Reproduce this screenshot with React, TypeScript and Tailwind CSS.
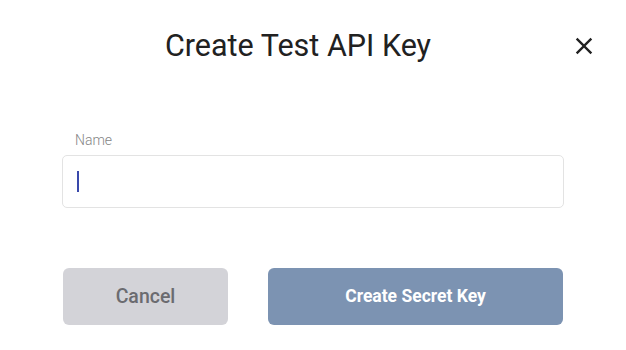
export default function App() {
  return (
    <div
      className="w-[626px] h-[350px] bg-white overflow-hidden"
      style={{ fontFamily: 'Roboto, "Liberation Sans", sans-serif' }}
    >
      <div className="flex items-center pt-[26px] pl-[26px] pr-[28px] h-[66px]">
        <h1 className="flex-1 text-center text-[30.5px] leading-[36px] text-[#212121] font-normal">
          Create Test API Key
        </h1>
        <button className="w-[28px] h-[28px] flex items-center justify-center text-[#212121]">
          <svg width="28" height="28" viewBox="0 0 24 24" fill="currentColor">
            <path d="M19 6.41L17.59 5 12 10.59 6.41 5 5 6.41 10.59 12 5 17.59 6.41 19 12 13.41 17.59 19 19 17.59 13.41 12z" />
          </svg>
        </button>
      </div>

      <div className="px-[62px] pt-[65px]">
        <label className="block pl-[13px] text-[14px] leading-[18px] text-[#858585] font-light">Name</label>
        <div className="mt-[6px] h-[53px] border border-[#e3e3e3] rounded-[5px] flex items-center px-[14px]">
          <div className="w-[2px] h-[21px] bg-[#3949ab]" />
        </div>
      </div>

      <div className="flex gap-[40px] px-[63px] pt-[60px]">
        <button className="w-[165px] h-[57px] rounded-[6px] bg-[#d3d3d8] text-[#6b6b70] text-[19.5px] font-medium">
          Cancel
        </button>
        <button className="w-[295px] h-[57px] rounded-[6px] bg-[#7c93b2] text-white text-[17.5px] font-bold">
          Create Secret Key
        </button>
      </div>
    </div>
  );
}
